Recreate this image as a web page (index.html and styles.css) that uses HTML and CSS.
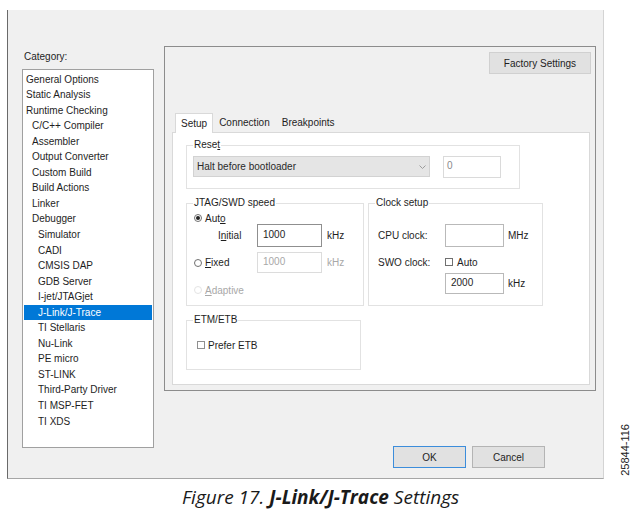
FILE: index.html
```html
<!DOCTYPE html>
<html lang="en">
<head>
  <meta charset="UTF-8">
  <title>J-Link/J-Trace Settings</title>
  <link rel="stylesheet" href="styles.css">
</head>
<body>
  <div class="figure">
    <div class="dialog">
      <div class="category">
        <div class="category-label">Category:</div>
        <ul class="category-list">
          <li>General Options</li>
          <li>Static Analysis</li>
          <li>Runtime Checking</li>
          <li class="lvl1">C/C++ Compiler</li>
          <li class="lvl1">Assembler</li>
          <li class="lvl1">Output Converter</li>
          <li class="lvl1">Custom Build</li>
          <li class="lvl1">Build Actions</li>
          <li class="lvl1">Linker</li>
          <li class="lvl1">Debugger</li>
          <li class="lvl2">Simulator</li>
          <li class="lvl2">CADI</li>
          <li class="lvl2">CMSIS DAP</li>
          <li class="lvl2">GDB Server</li>
          <li class="lvl2">I-jet/JTAGjet</li>
          <li class="lvl2 selected">J-Link/J-Trace</li>
          <li class="lvl2">TI Stellaris</li>
          <li class="lvl2">Nu-Link</li>
          <li class="lvl2">PE micro</li>
          <li class="lvl2">ST-LINK</li>
          <li class="lvl2">Third-Party Driver</li>
          <li class="lvl2">TI MSP-FET</li>
          <li class="lvl2">TI XDS</li>
        </ul>
      </div>

      <div class="settings">
        <div class="panel">
          <button class="btn factory">Factory Settings</button>
          <div class="tabs">
            <div class="tab active">Setup</div>
            <div class="tab">Connection</div>
            <div class="tab">Breakpoints</div>
          </div>
          <div class="tab-page">
            <div class="group group-reset">
              <div class="group-title">Rese<u>t</u></div>
              <div class="reset-row">
                <div class="combo">
                  <span>Halt before bootloader</span>
                  <svg width="7" height="4" viewBox="0 0 7 4"><path d="M0.5 0.5 L3.5 3.5 L6.5 0.5" fill="none" stroke="#9c9c9c" stroke-width="1"/></svg>
                </div>
                <div class="field field-reset">0</div>
              </div>
            </div>

            <div class="group-row">
              <div class="group group-jtag">
                <div class="group-title">JTAG/SWD speed</div>
                <div class="opt-row row-auto">
                  <span class="radio on"></span>Aut<u>o</u>
                </div>
                <div class="opt-row row-initial">
                  <span class="cell jtag-cell indent">I<u>n</u>itial</span>
                  <div class="field field-jtag focus">1000</div>
                  <span class="unit">kHz</span>
                </div>
                <div class="opt-row row-fixed">
                  <span class="cell jtag-cell"><span class="radio"></span><u>F</u>ixed</span>
                  <div class="field field-jtag disabled">1000</div>
                  <span class="unit disabled-text">kHz</span>
                </div>
                <div class="opt-row row-adaptive disabled-text">
                  <span class="radio faint"></span><u>A</u>daptive
                </div>
              </div>

              <div class="group group-clock">
                <div class="group-title">Clock setup</div>
                <div class="opt-row row-cpu">
                  <span class="cell clock-cell">CPU clock:</span>
                  <div class="field field-clock"></div>
                  <span class="unit">MHz</span>
                </div>
                <div class="opt-row row-swo">
                  <span class="cell clock-cell">SWO clock:</span>
                  <span class="check"></span>Auto
                </div>
                <div class="opt-row row-swo-value">
                  <span class="cell clock-cell"></span>
                  <div class="field field-clock">2000</div>
                  <span class="unit">kHz</span>
                </div>
              </div>
            </div>

            <div class="group group-etm">
              <div class="group-title">ETM/ETB</div>
              <div class="opt-row row-etb">
                <span class="check"></span>Prefer ETB
              </div>
            </div>
          </div>
        </div>

        <div class="actions">
          <button class="btn ok">OK</button>
          <button class="btn">Cancel</button>
        </div>
      </div>
    </div>
    <div class="figure-id">25844-116</div>
  </div>
  <div class="caption">Figure 17. <b>J-Link/J-Trace</b> Settings</div>
</body>
</html>
```

FILE: styles.css
```css
body {
  margin: 0;
  background: #fff;
  font-family: "Liberation Sans", Arial, sans-serif;
  font-size: 10px;
  color: #1e1e1e;
}

u {
  text-decoration: underline;
}

.figure {
  display: flex;
  align-items: flex-end;
  padding: 10px 0 0 7px;
}

.dialog {
  width: 597px;
  height: 469px;
  box-sizing: border-box;
  background: #f0f0f0;
  border-left: 1px solid #6a6a6a;
  border-right: 1px solid #d4d4d4;
  border-bottom: 1px solid #a6a6a6;
  display: flex;
  align-items: flex-start;
}

.figure-id {
  writing-mode: vertical-rl;
  transform: rotate(180deg);
  font-size: 11px;
  line-height: 12px;
  margin: 0 0 3px 15px;
  color: #222;
}

/* category tree */
.category {
  margin: 41px 0 0 14px;
  width: 132px;
}

.category-label {
  line-height: 12px;
  margin: 0 0 6px 2px;
}

.category-list {
  list-style: none;
  margin: 0;
  padding: 1.5px 1px 0 1px;
  height: 379px;
  box-sizing: border-box;
  background: #fff;
  border: 1px solid #a0a0a0;
}

.category-list li {
  height: 15.55px;
  line-height: 15.55px;
  padding-left: 2px;
  white-space: nowrap;
}

.category-list .lvl1 {
  padding-left: 8px;
}

.category-list .lvl2 {
  padding-left: 14px;
}

.category-list .selected {
  background: #0078d7;
  color: #fff;
}

/* right side */
.settings {
  margin: 36px 0 0 10px;
  display: flex;
  flex-direction: column;
}

.panel {
  width: 432px;
  height: 345px;
  box-sizing: border-box;
  border: 1px solid #8c8c8c;
  display: flex;
  flex-direction: column;
}

.btn {
  font: inherit;
  color: inherit;
  background: #e1e1e1;
  border: 1px solid #b4b4b4;
  height: 22px;
  padding: 0;
  box-sizing: border-box;
}

.factory {
  align-self: flex-end;
  width: 102px;
  margin: 5px 4px 0 0;
  border-color: #d0d0d0;
}

.tabs {
  display: flex;
  align-items: flex-end;
  height: 19px;
  margin: 39px 0 0 10px;
}

.tab {
  padding: 0 6px;
  line-height: 18px;
}

.tab.active {
  padding: 0 5px;
  background: #fff;
  border: 1px solid #d9d9d9;
  border-bottom: none;
  line-height: 19px;
  margin-bottom: -1px;
  position: relative;
  z-index: 1;
}

.tab-page {
  flex: 1;
  margin: 0 5px 5px 7px;
  background: #fff;
  border: 1px solid #d9d9d9;
  padding: 12px 0 0 13px;
}

/* group boxes */
.group {
  border: 1px solid #e2e2e2;
  padding: 0 6px;
  box-sizing: border-box;
}

.group-title {
  display: table;
  background: #fff;
  padding: 0 1px;
  line-height: 12px;
  margin-top: -7px;
}

.group-reset {
  width: 334px;
  padding-bottom: 10px;
}

.reset-row {
  display: flex;
  align-items: flex-start;
  gap: 13px;
  margin-top: 5px;
}

.combo {
  width: 237px;
  height: 21px;
  box-sizing: border-box;
  background: #e5e5e5;
  border: 1px solid #d2d2d2;
  display: flex;
  align-items: center;
  justify-content: space-between;
  padding: 0 3px 0 3px;
  color: #2a2a2a;
}

.field {
  box-sizing: border-box;
  background: #fff;
  border: 1px solid #c4c4c4;
  height: 21px;
  padding: 3px 0 0 5px;
  line-height: 12px;
}

.field-reset {
  width: 58px;
  height: 22px;
  border-color: #dadada;
  padding-left: 3px;
  color: #8a8a8a;
}

.group-row {
  display: flex;
  gap: 4px;
  margin-top: 14px;
}

.group-jtag {
  width: 178px;
  height: 103px;
}

.group-clock {
  width: 175px;
  height: 103px;
}

.opt-row {
  display: flex;
  align-items: center;
}

.cell {
  display: flex;
  align-items: center;
  box-sizing: border-box;
  padding-left: 1px;
}

.jtag-cell {
  width: 64px;
}

.jtag-cell.indent {
  padding-left: 25px;
}

.clock-cell {
  width: 70px;
  padding-left: 3px;
}

.unit {
  margin-left: 5px;
}

.group-clock .unit {
  margin-left: 4px;
}

.field-jtag {
  width: 65px;
}

.field-clock {
  width: 59px;
  border-color: #b9b9b9;
}

.focus {
  border-color: #8f8f8f;
  height: 23px;
  padding-top: 4px;
}

.disabled {
  border-color: #dcdcdc;
  color: #a8a8a8;
}

.disabled-text {
  color: #a8a8a8;
}

.row-auto {
  height: 12px;
  margin-top: 3px;
  padding-left: 1px;
}

.row-initial {
  height: 23px;
}

.row-fixed {
  height: 21px;
  margin-top: 5px;
}

.row-adaptive {
  height: 12px;
  margin-top: 11px;
  padding-left: 1px;
}

.row-cpu {
  height: 23px;
  margin-top: 15px;
}

.row-cpu .field {
  height: 23px;
}

.row-swo {
  height: 12px;
  margin-top: 9px;
}

.row-swo-value {
  height: 21px;
  margin-top: 5px;
}

.radio {
  width: 8px;
  height: 8px;
  box-sizing: border-box;
  border: 1px solid #707070;
  border-radius: 50%;
  background: #fff;
  margin-right: 3px;
  display: flex;
  align-items: center;
  justify-content: center;
}

.radio.on::after {
  content: "";
  width: 4px;
  height: 4px;
  border-radius: 50%;
  background: #222;
}

.radio.faint {
  border-color: #e4e4e4;
}

.check {
  width: 8px;
  height: 8px;
  box-sizing: border-box;
  border: 1px solid #707070;
  background: #fff;
  margin-right: 4px;
}

.group-etm {
  width: 175px;
  margin-top: 14px;
  padding-bottom: 18px;
}

.row-etb {
  height: 12px;
  margin-top: 13px;
  padding-left: 4px;
}

.row-etb .check {
  margin-right: 3px;
  border-color: #909090;
}

.actions {
  display: flex;
  justify-content: flex-end;
  gap: 6px;
  margin: 55px 51px 0 0;
}

.actions .btn {
  width: 73px;
}

.actions .ok {
  border-color: #3c8ddb;
}

.caption {
  margin: 5px 0 0 182px;
  font-family: "Open Sans", "Liberation Sans", sans-serif;
  font-style: italic;
  font-size: 19px;
  line-height: 26px;
  color: #1a1a1a;
}
```
